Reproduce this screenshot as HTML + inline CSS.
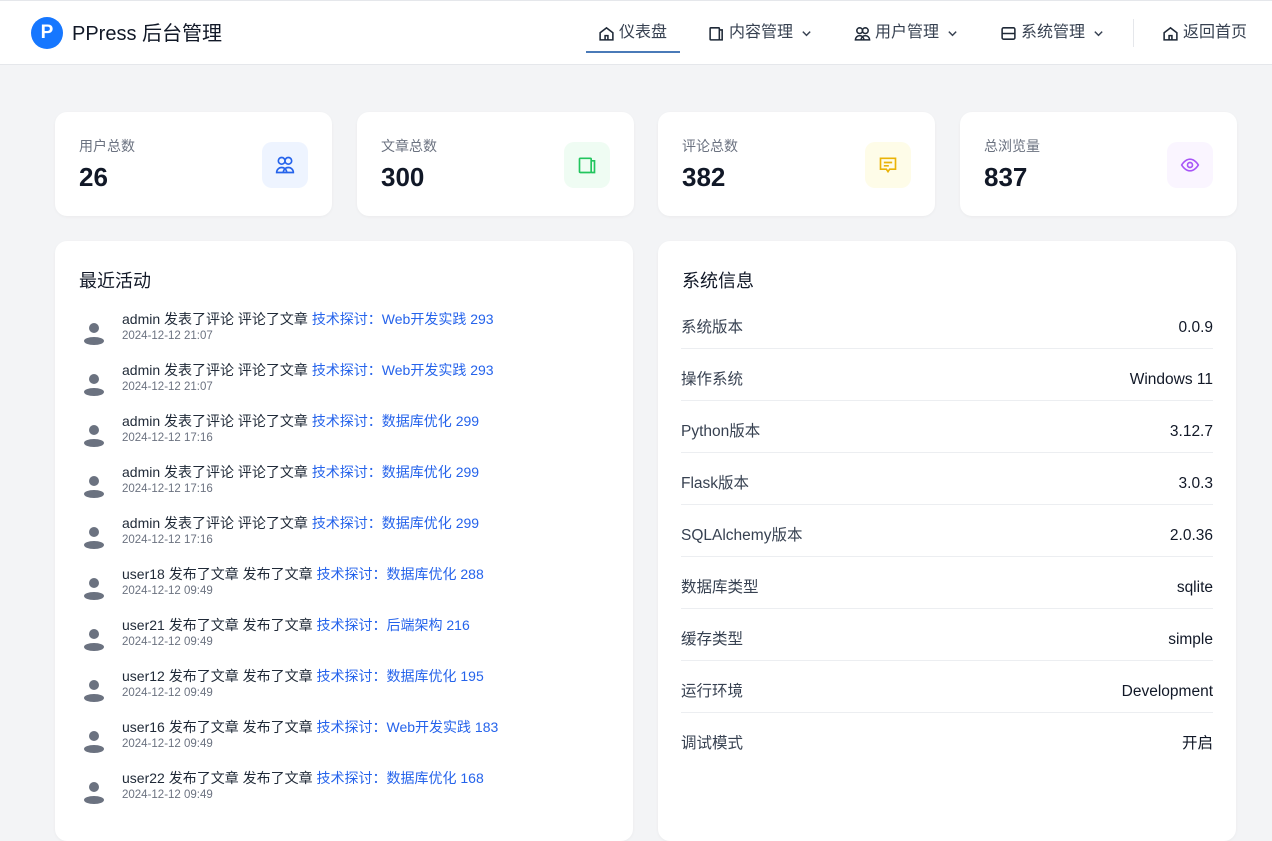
<!DOCTYPE html>
<html><head><meta charset="utf-8"><style>
*{box-sizing:border-box;margin:0;padding:0}
body{width:1272px;height:800px;overflow:hidden;background:#f3f4f6;font-family:"Liberation Sans","Noto Sans CJK SC",sans-serif;color:#1f2937;position:relative}
.hd{position:absolute;left:0;top:0;width:1272px;height:65px;background:#fff;border-bottom:1px solid #e5e7eb;border-top:1px solid #e5e7eb}
.logo{position:absolute;left:31px;top:16px;width:32px;height:32px;border-radius:50%;background:#1677ff;color:#fff;font-weight:bold;font-size:19px;text-align:center;line-height:32px}
.brand{position:absolute;left:72px;top:19px;font-size:20px;line-height:28px;color:#111827}
.nav{position:absolute;top:21px;height:22px;line-height:22px;font-size:16px;color:#374151;display:flex;align-items:center;gap:4px;white-space:nowrap}
.nav svg{width:17px;height:17px}
.nav svg.ch{width:11px;height:11px;margin-left:4px}
.ul{position:absolute;left:586px;top:50px;width:94px;height:2px;background:#4a7ab8}
.div{position:absolute;left:1133px;top:18px;width:1px;height:28px;background:#e5e7eb}
.card{position:absolute;background:#fff;border-radius:12px;box-shadow:0 1px 3px rgba(0,0,0,.04)}
.st{top:112px;height:104px;width:277px}
.st .l{position:absolute;left:24px;top:24px;font-size:14px;line-height:20px;color:#6b7280}
.st .v{position:absolute;left:24px;top:49px;font-size:26px;line-height:32px;font-weight:bold;color:#111827}
.st .ic{position:absolute;left:207px;top:30px;width:46px;height:46px;border-radius:10px;display:flex;align-items:center;justify-content:center}
.st .ic svg{width:20px;height:20px}
.pt{position:absolute;left:24px;top:27px;font-size:18px;line-height:26px;color:#111827}
.act{position:absolute;left:24px;height:51px;width:540px}
.av{position:absolute;left:4px;top:12px;width:22px;height:24px}
.at{position:absolute;left:43px;top:0;font-size:14px;line-height:20px;white-space:nowrap;color:#1f2937}
.at a{color:#2563eb;text-decoration:none}
.ad{position:absolute;left:43px;top:20px;font-size:11.5px;line-height:14px;white-space:nowrap;color:#6b7280}
.row{position:absolute;left:23px;width:532px;height:52px;border-bottom:1px solid #eceef1;font-size:15.5px;line-height:20px;color:#374151;display:flex;justify-content:space-between;padding-top:21px}
.row .r{color:#111827}
</style></head><body>
<div class="hd">
<div class="logo">P</div><div class="brand">PPress 后台管理</div>
<div class="nav" style="left:598px"><svg viewBox="0 0 24 24" fill="none" stroke="#1f2937" stroke-width="2.2"><path d="M3 11l9-7 9 7v10H3z"/><path d="M10 21v-6h4v6"/></svg>仪表盘</div>
<div class="ul"></div>
<div class="nav" style="left:708px"><svg viewBox="0 0 24 24" fill="none" stroke="#1f2937" stroke-width="2.2"><rect x="3" y="4" width="13" height="17" rx="1"/><path d="M16 7h4v14h-4"/></svg>内容管理<svg class="ch" viewBox="0 0 12 12" fill="none" stroke="#374151" stroke-width="1.6"><path d="M2 4l4 4 4-4"/></svg></div>
<div class="nav" style="left:854px"><svg viewBox="0 0 24 24" fill="none" stroke="#1f2937" stroke-width="2.2"><circle cx="8" cy="8" r="4"/><circle cx="16" cy="8" r="4"/><path d="M2 21a6 6 0 0 1 12 0zM10 21a6 6 0 0 1 12 0z"/></svg>用户管理<svg class="ch" viewBox="0 0 12 12" fill="none" stroke="#374151" stroke-width="1.6"><path d="M2 4l4 4 4-4"/></svg></div>
<div class="nav" style="left:1000px"><svg viewBox="0 0 24 24" fill="none" stroke="#1f2937" stroke-width="2.2"><rect x="3" y="4" width="18" height="16" rx="2"/><path d="M3 12h18M17 8h.01M17 16h.01"/></svg>系统管理<svg class="ch" viewBox="0 0 12 12" fill="none" stroke="#374151" stroke-width="1.6"><path d="M2 4l4 4 4-4"/></svg></div>
<div class="div"></div>
<div class="nav" style="left:1162px"><svg viewBox="0 0 24 24" fill="none" stroke="#1f2937" stroke-width="2.2"><path d="M3 11l9-7 9 7v10H3z"/><path d="M10 21v-6h4v6"/></svg>返回首页</div>
</div>

<div class="card st" style="left:55px"><div class="l">用户总数</div><div class="v">26</div><div class="ic" style="background:#eef4ff"><svg viewBox="0 0 24 24" fill="none" stroke="#2563eb" stroke-width="2"><circle cx="8" cy="7" r="4"/><circle cx="16" cy="7" r="4"/><path d="M2 21a6 6 0 0 1 12 0zM10 21a6 6 0 0 1 12 0z"/></svg></div></div>
<div class="card st" style="left:357px"><div class="l">文章总数</div><div class="v">300</div><div class="ic" style="background:#effcf3"><svg viewBox="0 0 24 24" fill="none" stroke="#22c55e" stroke-width="2"><rect x="3" y="4" width="14" height="17" rx="1"/><path d="M17 7h4v14h-4"/></svg></div></div>
<div class="card st" style="left:658px"><div class="l">评论总数</div><div class="v">382</div><div class="ic" style="background:#fefce8"><svg viewBox="0 0 24 24" fill="none" stroke="#eab308" stroke-width="2"><path d="M3 4h18v13h-7l-2 3-2-3H3z"/><path d="M7 9h10M7 13h6"/></svg></div></div>
<div class="card st" style="left:960px"><div class="l">总浏览量</div><div class="v">837</div><div class="ic" style="background:#faf5ff"><svg viewBox="0 0 24 24" fill="none" stroke="#a855f7" stroke-width="2"><path d="M2 12s4-7 10-7 10 7 10 7-4 7-10 7S2 12 2 12z"/><circle cx="12" cy="12" r="3"/></svg></div></div>

<div class="card" style="left:55px;top:241px;width:578px;height:600px">
<div class="pt">最近活动</div>
</div>
<div class="card" style="left:658px;top:241px;width:578px;height:600px">
<div class="pt">系统信息</div>
<div class="row" style="top:56px"><span>系统版本</span><span class="r">0.0.9</span></div>
<div class="row" style="top:108px"><span>操作系统</span><span class="r">Windows 11</span></div>
<div class="row" style="top:160px"><span>Python版本</span><span class="r">3.12.7</span></div>
<div class="row" style="top:212px"><span>Flask版本</span><span class="r">3.0.3</span></div>
<div class="row" style="top:264px"><span>SQLAlchemy版本</span><span class="r">2.0.36</span></div>
<div class="row" style="top:316px"><span>数据库类型</span><span class="r">sqlite</span></div>
<div class="row" style="top:368px"><span>缓存类型</span><span class="r">simple</span></div>
<div class="row" style="top:420px"><span>运行环境</span><span class="r">Development</span></div>
<div class="row" style="top:472px;border:none"><span>调试模式</span><span class="r">开启</span></div>
</div>

<div style="position:absolute;left:55px;top:241px">
<div class="act" style="top:68px"><svg class="av" viewBox="0 0 22 24"><circle cx="11" cy="7" r="5" fill="#6b7280"/><ellipse cx="11" cy="20" rx="10" ry="4" fill="#6b7280"/></svg><div class="at">admin 发表了评论 评论了文章 <a>技术探讨：Web开发实践 293</a></div><div class="ad">2024-12-12 21:07</div></div>
<div class="act" style="top:119px"><svg class="av" viewBox="0 0 22 24"><circle cx="11" cy="7" r="5" fill="#6b7280"/><ellipse cx="11" cy="20" rx="10" ry="4" fill="#6b7280"/></svg><div class="at">admin 发表了评论 评论了文章 <a>技术探讨：Web开发实践 293</a></div><div class="ad">2024-12-12 21:07</div></div>
<div class="act" style="top:170px"><svg class="av" viewBox="0 0 22 24"><circle cx="11" cy="7" r="5" fill="#6b7280"/><ellipse cx="11" cy="20" rx="10" ry="4" fill="#6b7280"/></svg><div class="at">admin 发表了评论 评论了文章 <a>技术探讨：数据库优化 299</a></div><div class="ad">2024-12-12 17:16</div></div>
<div class="act" style="top:221px"><svg class="av" viewBox="0 0 22 24"><circle cx="11" cy="7" r="5" fill="#6b7280"/><ellipse cx="11" cy="20" rx="10" ry="4" fill="#6b7280"/></svg><div class="at">admin 发表了评论 评论了文章 <a>技术探讨：数据库优化 299</a></div><div class="ad">2024-12-12 17:16</div></div>
<div class="act" style="top:272px"><svg class="av" viewBox="0 0 22 24"><circle cx="11" cy="7" r="5" fill="#6b7280"/><ellipse cx="11" cy="20" rx="10" ry="4" fill="#6b7280"/></svg><div class="at">admin 发表了评论 评论了文章 <a>技术探讨：数据库优化 299</a></div><div class="ad">2024-12-12 17:16</div></div>
<div class="act" style="top:323px"><svg class="av" viewBox="0 0 22 24"><circle cx="11" cy="7" r="5" fill="#6b7280"/><ellipse cx="11" cy="20" rx="10" ry="4" fill="#6b7280"/></svg><div class="at">user18 发布了文章 发布了文章 <a>技术探讨：数据库优化 288</a></div><div class="ad">2024-12-12 09:49</div></div>
<div class="act" style="top:374px"><svg class="av" viewBox="0 0 22 24"><circle cx="11" cy="7" r="5" fill="#6b7280"/><ellipse cx="11" cy="20" rx="10" ry="4" fill="#6b7280"/></svg><div class="at">user21 发布了文章 发布了文章 <a>技术探讨：后端架构 216</a></div><div class="ad">2024-12-12 09:49</div></div>
<div class="act" style="top:425px"><svg class="av" viewBox="0 0 22 24"><circle cx="11" cy="7" r="5" fill="#6b7280"/><ellipse cx="11" cy="20" rx="10" ry="4" fill="#6b7280"/></svg><div class="at">user12 发布了文章 发布了文章 <a>技术探讨：数据库优化 195</a></div><div class="ad">2024-12-12 09:49</div></div>
<div class="act" style="top:476px"><svg class="av" viewBox="0 0 22 24"><circle cx="11" cy="7" r="5" fill="#6b7280"/><ellipse cx="11" cy="20" rx="10" ry="4" fill="#6b7280"/></svg><div class="at">user16 发布了文章 发布了文章 <a>技术探讨：Web开发实践 183</a></div><div class="ad">2024-12-12 09:49</div></div>
<div class="act" style="top:527px"><svg class="av" viewBox="0 0 22 24"><circle cx="11" cy="7" r="5" fill="#6b7280"/><ellipse cx="11" cy="20" rx="10" ry="4" fill="#6b7280"/></svg><div class="at">user22 发布了文章 发布了文章 <a>技术探讨：数据库优化 168</a></div><div class="ad">2024-12-12 09:49</div></div>
</div>
</body></html>
